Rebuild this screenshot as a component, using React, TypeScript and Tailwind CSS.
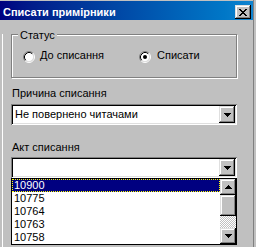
const raised =
  "bg-[#c0c0c0] shadow-[inset_-1px_-1px_0_#000,inset_1px_1px_0_#dfdfdf,inset_-2px_-2px_0_#808080,inset_2px_2px_0_#fff]";

function Arrow({ up }: { up?: boolean }) {
  return (
    <svg width="7" height="4" viewBox="0 0 7 4" shapeRendering="crispEdges" className={up ? "rotate-180" : ""}>
      <path d="M0 0h7v1H0zM1 1h5v1H1zM2 2h3v1H2zM3 3h1v1H3z" fill="#000" />
    </svg>
  );
}

function CloseGlyph() {
  return (
    <svg width="8" height="7" viewBox="0 0 8 7" shapeRendering="crispEdges">
      <path
        d="M0 0h2v1H0zM6 0h2v1H6zM1 1h2v1H1zM5 1h2v1H5zM2 2h4v1H2zM3 3h2v1H3zM2 4h4v1H2zM1 5h2v1H1zM5 5h2v1H5zM0 6h2v1H0zM6 6h2v1H6z"
        fill="#000"
      />
    </svg>
  );
}

function Radio({ checked }: { checked?: boolean }) {
  return (
    <svg width="12" height="12" viewBox="0 0 12 12" className="shrink-0">
      <circle cx="6" cy="6" r="4.5" fill="#fff" />
      <path d="M2.11 9.89A5.5 5.5 0 0 1 9.89 2.11" stroke="#808080" fill="none" />
      <path d="M9.89 2.11A5.5 5.5 0 0 1 2.11 9.89" stroke="#fff" fill="none" />
      <path d="M2.82 9.18A4.5 4.5 0 0 1 9.18 2.82" stroke="#000" fill="none" />
      <path d="M9.18 2.82A4.5 4.5 0 0 1 2.82 9.18" stroke="#dfdfdf" fill="none" />
      {checked && <circle cx="6" cy="6" r="2" fill="#000" />}
    </svg>
  );
}

function Combo({ value }: { value?: string }) {
  return (
    <div className="flex h-[21px] w-[226px] bg-white p-[2px] shadow-[inset_1px_1px_0_#808080,inset_-1px_-1px_0_#fff,inset_2px_2px_0_#000,inset_-2px_-2px_0_#dfdfdf]">
      <div className="flex-1 pl-[2px] leading-[17px]">{value}</div>
      <div className={`flex h-[17px] w-[16px] items-center justify-center ${raised}`}>
        <Arrow />
      </div>
    </div>
  );
}

const acts = ["10900", "10775", "10764", "10763", "10758"];

export default function App() {
  return (
    <div className="flex h-[247px] w-[256px] overflow-hidden bg-[#c0c0c0] font-['Liberation_Sans',Arial,sans-serif] text-[11px] text-black">
      <div className="w-[253px]">
        {/* title bar */}
        <div className="mt-px flex h-[19px] items-start justify-between bg-linear-to-r from-[#000080] to-[#1084d0] pl-[3px] pr-[2px]">
          <span className="pt-[5px] text-[11px] font-bold leading-[13px] text-white">Списати примірники</span>
          <div className={`mt-[4px] flex h-[14px] w-[16px] items-center justify-center ${raised}`}>
            <CloseGlyph />
          </div>
        </div>

        <div className="ml-[2px] h-[227px] border-l border-white pl-[8px]">
          {/* group */}
          <div className="relative mt-[14px] h-[44px] w-[226px] border border-[#808080] shadow-[inset_1px_1px_0_#fff,1px_1px_0_#fff]">
            <span className="absolute left-[6px] top-[-6px] bg-[#c0c0c0] px-[2px] leading-[13px]">Статус</span>
            <div className="flex pl-[11px] pt-[16px]">
              <div className="flex w-[116px] items-start gap-[5px]">
                <Radio />
                <span className="-mt-[2px] leading-[13px]">До списання</span>
              </div>
              <div className="flex items-start gap-[6px]">
                <Radio checked />
                <span className="-mt-[2px] leading-[13px]">Списати</span>
              </div>
            </div>
          </div>

          <div className="ml-px mt-[9px] leading-[13px]">Причина списання</div>
          <div className="mt-[4px]">
            <Combo value="Не повернено читачами" />
          </div>

          <div className="ml-px mt-[16px] leading-[13px]">Акт списання</div>
          <div className="mt-[3px]">
            <Combo />
          </div>

          {/* dropdown list */}
          <div className="flex h-[67px] w-[226px] border border-black bg-white">
            <div className="flex-1">
              {acts.map((a, i) =>
                i === 0 ? (
                  <div
                    key={a}
                    className="h-[13px] border border-dotted border-[#ffff00] bg-[#000080] pl-px leading-[11px] text-white"
                  >
                    {a}
                  </div>
                ) : (
                  <div key={a} className="h-[13px] pl-[2px] leading-[13px]">
                    {a}
                  </div>
                )
              )}
            </div>
            <div className="flex w-[16px] flex-col">
              <div className={`flex h-[16px] items-center justify-center ${raised}`}>
                <Arrow up />
              </div>
              <div className={`h-[21px] ${raised}`} />
              <div className="flex-1 bg-[image:repeating-conic-gradient(#c0c0c0_0_25%,#fff_0_50%)] bg-[length:2px_2px]" />
              <div className={`flex h-[16px] items-center justify-center ${raised}`}>
                <Arrow />
              </div>
            </div>
          </div>
        </div>
      </div>
      <div className="h-full w-px bg-[#808080]" />
    </div>
  );
}
